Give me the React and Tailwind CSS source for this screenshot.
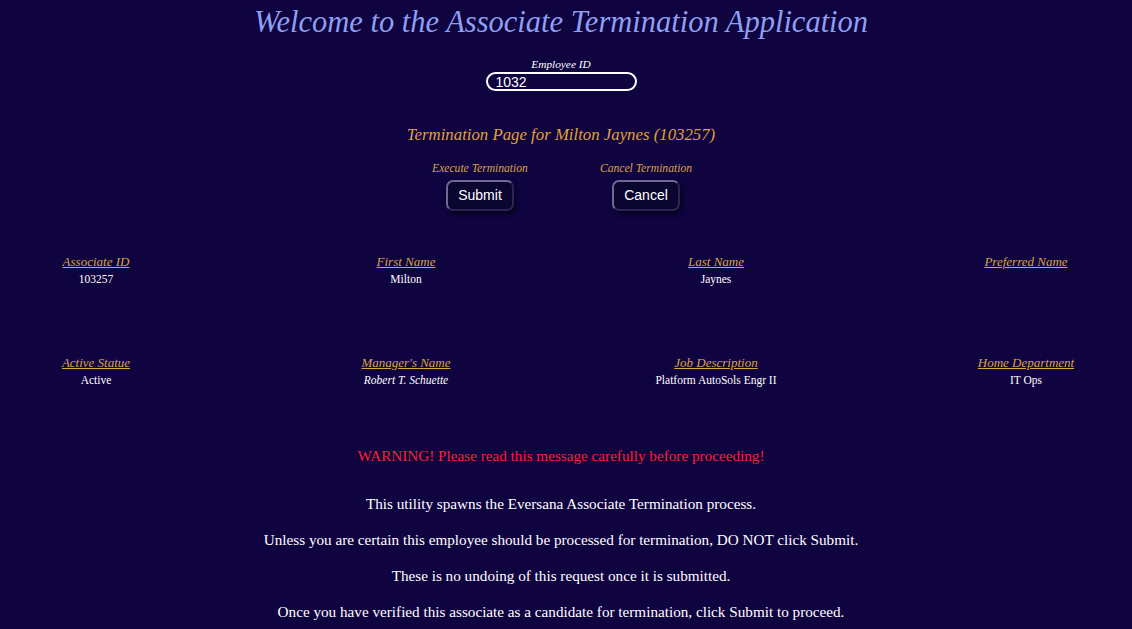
const serif = { fontFamily: '"Liberation Serif", "Times New Roman", serif' }

const fields = [
  { label: 'Associate ID', value: '103257' },
  { label: 'First Name', value: 'Milton' },
  { label: 'Last Name', value: 'Jaynes' },
  { label: 'Preferred Name', value: '' },
  { label: 'Active Statue', value: 'Active' },
  { label: "Manager's Name", value: 'Robert T. Schuette', italic: true },
  { label: 'Job Description', value: 'Platform AutoSols Engr II' },
  { label: 'Home Department', value: 'IT Ops' },
]

function ActionButton({ caption, text }) {
  return (
    <div className="flex flex-col items-center w-[140px]">
      <div className="italic text-[11.6px] leading-[14px] text-[#d9a441]">{caption}</div>
      <button
        className="mt-[4px] w-[68px] h-[31px] rounded-[7px] border-2 border-[#6d6a93] border-b-[#2a2552] border-r-[#2a2552] bg-[#0b0630] text-white text-[14px] shadow-[2px_3px_4px_rgba(0,0,0,0.6)]"
        style={{ fontFamily: '"Liberation Sans", Arial, sans-serif' }}
      >
        {text}
      </button>
    </div>
  )
}

export default function App() {
  return (
    <div className="min-h-[629px] w-full bg-[#0f0340] overflow-hidden" style={serif}>
      <div className="w-[1122px] flex flex-col items-center">
        <h1 className="italic text-[30.5px] leading-[44px] text-[#8f9ff0] mt-0">
          Welcome to the Associate Termination Application
        </h1>

        <div className="mt-[14px] italic text-[11.3px] leading-[12px] text-white">Employee ID</div>
        <input
          defaultValue="1032"
          className="mt-[2px] w-[151px] h-[19px] rounded-full border-2 border-white bg-transparent px-[8px] text-[14px] leading-[15px] text-white outline-none"
          style={{ fontFamily: '"Liberation Sans", Arial, sans-serif' }}
        />

        <div className="mt-[33px] italic text-[16.8px] leading-[22px] text-[#e0a235]">
          Termination Page for Milton Jaynes (103257)
        </div>

        <div className="mt-[16px] ml-[4px] flex gap-[26px]">
          <ActionButton caption="Execute Termination" text="Submit" />
          <ActionButton caption="Cancel Termination" text="Cancel" />
        </div>

        <div className="mt-[43px] grid grid-cols-[repeat(4,160px)] gap-x-[150px] gap-y-[67px]">
          {fields.map((f) => (
            <div key={f.label} className="flex flex-col items-center text-center">
              <div className="italic underline text-[13px] leading-[16px] text-[#d9a441]">{f.label}</div>
              <div className={(f.italic ? 'italic ' : '') + 'text-[11.5px] leading-[18px] text-white h-[18px]'}>
                {f.value}
              </div>
            </div>
          ))}
        </div>

        <div className="mt-[58px] text-[15.2px] leading-[18px] text-[#ff1f2b]">
          WARNING! Please read this message carefully before proceeding!
        </div>

        <div className="mt-[30px] flex flex-col items-center gap-[18px] text-[15.2px] leading-[18px] text-white">
          <p>This utility spawns the Eversana Associate Termination process.</p>
          <p>Unless you are certain this employee should be processed for termination, DO NOT click Submit.</p>
          <p>These is no undoing of this request once it is submitted.</p>
          <p>Once you have verified this associate as a candidate for termination, click Submit to proceed.</p>
        </div>
      </div>
    </div>
  )
}
